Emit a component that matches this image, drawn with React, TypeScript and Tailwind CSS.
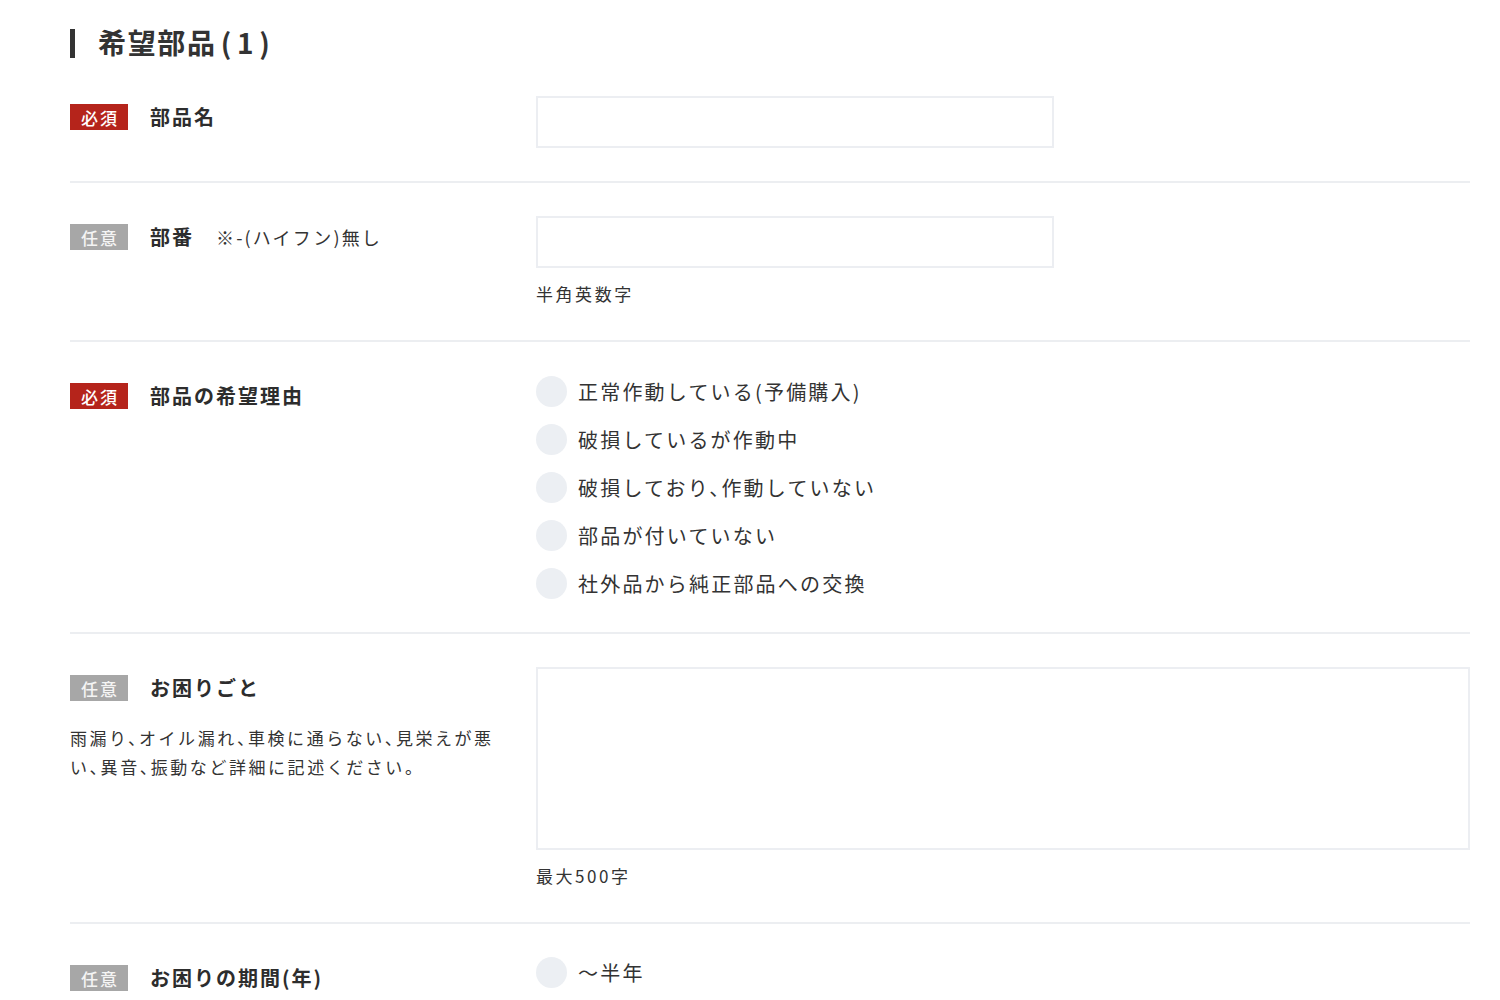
const font = "font-['Noto_Sans_CJK_JP','Noto_Sans',sans-serif]";

function Badge({ required }: { required: boolean }) {
  return (
    <span
      className={`inline-flex h-[26px] w-[58px] shrink-0 items-center justify-center pl-[2px] text-[17px] font-medium leading-none tracking-[0.12em] ${
        required ? "bg-[#b5241b] text-white" : "bg-[#a7a7a7] text-[#f4f4f4]"
      }`}
    >
      {required ? "必須" : "任意"}
    </span>
  );
}

function Label({ required, children, note }: { required: boolean; children: React.ReactNode; note?: string }) {
  return (
    <div className="flex items-center pt-[8px]">
      <Badge required={required} />
      <span className="ml-[22px] text-[20px] font-bold leading-none tracking-[0.1em] text-[#2d2d2d]">{children}</span>
      {note && <span className="ml-[22px] text-[18px] leading-none tracking-[0.12em] text-[#333]">{note}</span>}
    </div>
  );
}

function Radio({ label }: { label: string }) {
  return (
    <label className="flex items-center">
      <span className="h-[31px] w-[31px] shrink-0 rounded-full bg-[#eceff3]" />
      <span className="ml-[11px] text-[20px] leading-none tracking-[0.11em] text-[#333] [font-feature-settings:'halt']">
        {label}
      </span>
    </label>
  );
}

function Row({ children, last }: { children: React.ReactNode; last?: boolean }) {
  return (
    <div
      className={`grid grid-cols-[440px_1fr] items-start gap-x-[26px] py-[33px] ${
        last ? "" : "border-b-2 border-[#eceef1]"
      }`}
    >
      {children}
    </div>
  );
}

const reasons = [
  "正常作動している(予備購入)",
  "破損しているが作動中",
  "破損しており、作動していない",
  "部品が付いていない",
  "社外品から純正部品への交換",
];

export default function App() {
  return (
    <div className={`${font} h-[1000px] overflow-hidden bg-white pl-[70px] pr-[30px] pt-[29px] text-[#333]`}>
      <h2 className="flex h-[29px] items-center">
        <span className="h-[29px] w-[5px] bg-[#333]" />
        <span className="ml-[23px] -mt-[3px] text-[28px] font-bold leading-none tracking-[0.06em] text-[#333]">
          希望部品<span className="px-[4px]">(</span>1<span className="px-[4px]">)</span>
        </span>
      </h2>

      <div className="mt-[5px]">
        <Row>
          <Label required>部品名</Label>
          <div>
            <input className="block h-[52px] w-[518px] border-2 border-[#eceef2] bg-white outline-none" />
          </div>
        </Row>

        <Row>
          <Label required={false} note="※-(ハイフン)無し">部番</Label>
          <div>
            <input className="block h-[52px] w-[518px] border-2 border-[#eceef2] bg-white outline-none" />
            <p className="mt-[13px] text-[17px] leading-[26px] tracking-[0.15em] text-[#333]">半角英数字</p>
          </div>
        </Row>

        <Row>
          <Label required>部品の希望理由</Label>
          <div className="flex flex-col gap-[17px] pt-[1px]">
            {reasons.map((r) => (
              <Radio key={r} label={r} />
            ))}
          </div>
        </Row>

        <Row>
          <div>
            <Label required={false}>お困りごと</Label>
            <p className="mt-[22px] text-[17px] leading-[29px] tracking-[0.15em] text-[#333] [font-feature-settings:'halt']">
              雨漏り、オイル漏れ、車検に通らない、見栄えが悪い、異音、振動など詳細に記述ください。
            </p>
          </div>
          <div>
            <textarea className="block h-[183px] w-full resize-none border-2 border-[#eceef2] bg-white outline-none" />
            <p className="mt-[13px] text-[17px] leading-[26px] tracking-[0.15em] text-[#333]">最大500字</p>
          </div>
        </Row>

        <Row last>
          <Label required={false}>お困りの期間(年)</Label>
          <div className="flex flex-col gap-[17px]">
            <Radio label="～半年" />
          </div>
        </Row>
      </div>
    </div>
  );
}
